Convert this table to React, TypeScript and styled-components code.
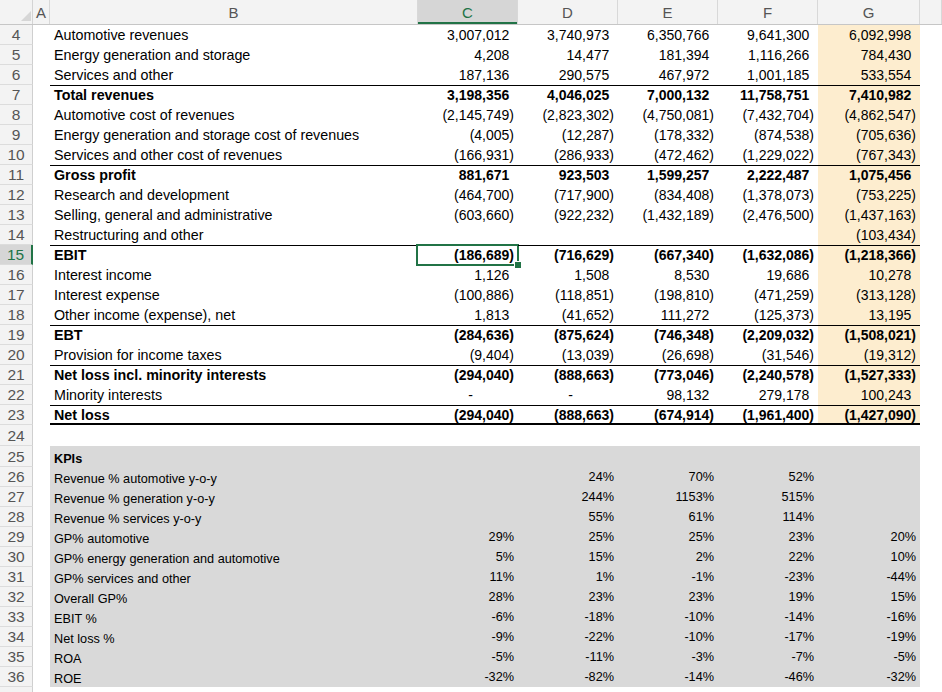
import React from "react";
import styled, { createGlobalStyle, css } from "styled-components";

const GlobalStyle = createGlobalStyle`
  html, body { margin: 0; padding: 0; background: #ffffff; }
  body { overflow: hidden; }
`;

const GRID = "33px 17px 368px repeat(4, 100px) 102px 1fr";
const GREEN = "#217346";
const PEACH = "#fdedcf";
const KPI_GRAY = "#d9d9d9";

const Sheet = styled.div`
  width: 942px;
  height: 692px;
  overflow: hidden;
  font-family: "Liberation Sans", Arial, sans-serif;
  color: #000;
`;

const HeaderRow = styled.div`
  display: grid;
  grid-template-columns: ${GRID};
  height: 25px;
  background: #f3f3f3;
  border-bottom: 1px solid #c6c6c6;
  box-sizing: border-box;
`;

const Corner = styled.div`
  position: relative;
  display: flex;
  align-items: flex-end;
  justify-content: flex-end;
  padding: 0 1px 3px 0;
  border-right: 1px solid #d4d4d4;
  box-sizing: border-box;
`;

const ColHeader = styled.div<{ $selected?: boolean }>`
  display: flex;
  align-items: flex-end;
  justify-content: center;
  padding-bottom: 2px;
  box-sizing: border-box;
  font-size: 15px;
  line-height: 18px;
  color: #555;
  border-right: 1px solid #d8d8d8;
  ${(p) =>
    p.$selected &&
    css`
      background: #d6d6d6;
      color: ${GREEN};
      box-shadow: inset 0 -2px 0 ${GREEN};
    `}
`;

const Row = styled.div<{ $h?: number }>`
  display: grid;
  grid-template-columns: ${GRID};
  height: ${(p) => p.$h ?? 20}px;
`;

const RowNum = styled.div<{ $selected?: boolean }>`
  display: flex;
  align-items: center;
  justify-content: center;
  padding-top: 1px;
  font-size: 15.5px;
  color: #555;
  background: #f3f3f3;
  border-bottom: 1px solid #dcdcdc;
  border-right: 1px solid #cfcfcf;
  box-sizing: border-box;
  ${(p) =>
    p.$selected &&
    css`
      background: #d6d6d6;
      color: ${GREEN};
      border-right: 2px solid ${GREEN};
    `}
`;

type CellProps = {
  $fill?: string;
  $top?: boolean;
  $thickBottom?: boolean;
  $bold?: boolean;
  $right?: boolean;
  $kpi?: boolean;
  $label?: boolean;
};

const Cell = styled.div<CellProps>`
  position: relative;
  display: flex;
  align-items: ${(p) => (p.$kpi && p.$label ? "flex-end" : "center")};
  justify-content: ${(p) => (p.$right ? "flex-end" : "flex-start")};
  padding: ${(p) => (p.$right ? "0 4px 0 0" : "0 0 0 4px")};
  box-sizing: border-box;
  white-space: nowrap;
  line-height: 16px;
  font-size: ${(p) => (p.$kpi ? "12.7px" : p.$label ? "14.3px" : "14px")};
  font-weight: ${(p) => (p.$bold ? 700 : 400)};
  background: ${(p) => p.$fill || "transparent"};
  box-shadow: ${(p) => {
    const s: string[] = [];
    if (p.$top) s.push("inset 0 1px 0 #000");
    if (p.$thickBottom) s.push("inset 0 -2px 0 #000");
    return s.length ? s.join(", ") : "none";
  }};
`;

const Pad = styled.span`
  visibility: hidden;
`;

const Dash = styled.span`
  padding-right: 41px;
`;

const Selection = styled.div`
  position: absolute;
  top: -1px;
  bottom: -1px;
  left: -2px;
  right: -1px;
  border: 2px solid ${GREEN};
  pointer-events: none;
`;

const FillHandle = styled.div`
  position: absolute;
  right: -5px;
  bottom: -5px;
  width: 6px;
  height: 6px;
  background: ${GREEN};
  border: 1px solid #fff;
`;

type FinRow = {
  n: number;
  label: string;
  vals: string[];
  bold?: boolean;
  top?: boolean;
  thickBottom?: boolean;
};

const fin: FinRow[] = [
  { n: 4, label: "Automotive revenues", vals: ["3,007,012", "3,740,973", "6,350,766", "9,641,300", "6,092,998"] },
  { n: 5, label: "Energy generation and storage", vals: ["4,208", "14,477", "181,394", "1,116,266", "784,430"] },
  { n: 6, label: "Services and other", vals: ["187,136", "290,575", "467,972", "1,001,185", "533,554"] },
  { n: 7, label: "Total revenues", vals: ["3,198,356", "4,046,025", "7,000,132", "11,758,751", "7,410,982"], bold: true, top: true },
  { n: 8, label: "Automotive cost of revenues", vals: ["(2,145,749)", "(2,823,302)", "(4,750,081)", "(7,432,704)", "(4,862,547)"] },
  { n: 9, label: "Energy generation and storage cost of revenues", vals: ["(4,005)", "(12,287)", "(178,332)", "(874,538)", "(705,636)"] },
  { n: 10, label: "Services and other cost of revenues", vals: ["(166,931)", "(286,933)", "(472,462)", "(1,229,022)", "(767,343)"] },
  { n: 11, label: "Gross profit", vals: ["881,671", "923,503", "1,599,257", "2,222,487", "1,075,456"], bold: true, top: true },
  { n: 12, label: "Research and development", vals: ["(464,700)", "(717,900)", "(834,408)", "(1,378,073)", "(753,225)"] },
  { n: 13, label: "Selling, general and administrative", vals: ["(603,660)", "(922,232)", "(1,432,189)", "(2,476,500)", "(1,437,163)"] },
  { n: 14, label: "Restructuring and other", vals: ["", "", "", "", "(103,434)"] },
  { n: 15, label: "EBIT", vals: ["(186,689)", "(716,629)", "(667,340)", "(1,632,086)", "(1,218,366)"], bold: true, top: true },
  { n: 16, label: "Interest income", vals: ["1,126", "1,508", "8,530", "19,686", "10,278"] },
  { n: 17, label: "Interest expense", vals: ["(100,886)", "(118,851)", "(198,810)", "(471,259)", "(313,128)"] },
  { n: 18, label: "Other income (expense), net", vals: ["1,813", "(41,652)", "111,272", "(125,373)", "13,195"] },
  { n: 19, label: "EBT", vals: ["(284,636)", "(875,624)", "(746,348)", "(2,209,032)", "(1,508,021)"], bold: true, top: true },
  { n: 20, label: "Provision for income taxes", vals: ["(9,404)", "(13,039)", "(26,698)", "(31,546)", "(19,312)"] },
  { n: 21, label: "Net loss incl. minority interests", vals: ["(294,040)", "(888,663)", "(773,046)", "(2,240,578)", "(1,527,333)"], bold: true, top: true },
  { n: 22, label: "Minority interests", vals: ["-", "-", "98,132", "279,178", "100,243"] },
  { n: 23, label: "Net loss", vals: ["(294,040)", "(888,663)", "(674,914)", "(1,961,400)", "(1,427,090)"], bold: true, top: true, thickBottom: true },
];

type KpiRow = { n: number; label: string; vals: string[]; bold?: boolean };

const kpis: KpiRow[] = [
  { n: 25, label: "KPIs", vals: ["", "", "", "", ""], bold: true },
  { n: 26, label: "Revenue % automotive y-o-y", vals: ["", "24%", "70%", "52%", ""] },
  { n: 27, label: "Revenue % generation y-o-y", vals: ["", "244%", "1153%", "515%", ""] },
  { n: 28, label: "Revenue % services y-o-y", vals: ["", "55%", "61%", "114%", ""] },
  { n: 29, label: "GP% automotive", vals: ["29%", "25%", "25%", "23%", "20%"] },
  { n: 30, label: "GP% energy generation and automotive", vals: ["5%", "15%", "2%", "22%", "10%"] },
  { n: 31, label: "GP% services and other", vals: ["11%", "1%", "-1%", "-23%", "-44%"] },
  { n: 32, label: "Overall GP%", vals: ["28%", "23%", "23%", "19%", "15%"] },
  { n: 33, label: "EBIT %", vals: ["-6%", "-18%", "-10%", "-14%", "-16%"] },
  { n: 34, label: "Net loss %", vals: ["-9%", "-22%", "-10%", "-17%", "-19%"] },
  { n: 35, label: "ROA", vals: ["-5%", "-11%", "-3%", "-7%", "-5%"] },
  { n: 36, label: "ROE", vals: ["-32%", "-82%", "-14%", "-46%", "-32%"] },
];

const cols = ["C", "D", "E", "F", "G"];

function NumberText({ v }: { v: string }) {
  if (v === "-") return <Dash>-</Dash>;
  if (v === "") return null;
  if (v.endsWith(")")) return <span>{v}</span>;
  return (
    <span>
      {v}
      <Pad>)</Pad>
    </span>
  );
}

export default function App() {
  return (
    <Sheet>
      <GlobalStyle />
      <HeaderRow>
        <Corner>
          <svg width="10" height="10" viewBox="0 0 10 10">
            <polygon points="10,0 10,10 0,10" fill="#d6d6d6" />
          </svg>
        </Corner>
        <ColHeader>A</ColHeader>
        <ColHeader>B</ColHeader>
        {cols.map((c) => (
          <ColHeader key={c} $selected={c === "C"}>
            {c}
          </ColHeader>
        ))}
        <ColHeader />
      </HeaderRow>

      {fin.map((r) => (
        <Row key={r.n}>
          <RowNum $selected={r.n === 15}>{r.n}</RowNum>
          <Cell />
          <Cell $label $top={r.top} $thickBottom={r.thickBottom} $bold={r.bold}>
            {r.label}
          </Cell>
          {r.vals.map((v, i) => (
            <Cell
              key={i}
              $right
              $top={r.top}
              $thickBottom={r.thickBottom}
              $bold={r.bold}
              $fill={i === 4 ? PEACH : undefined}
            >
              <NumberText v={v} />
              {r.n === 15 && i === 0 && (
                <Selection>
                  <FillHandle />
                </Selection>
              )}
            </Cell>
          ))}
          <Cell />
        </Row>
      ))}

      <Row $h={21}>
        <RowNum>24</RowNum>
      </Row>

      {kpis.map((r) => (
        <Row key={r.n} $h={r.n === 25 ? 21 : 20}>
          <RowNum>{r.n}</RowNum>
          <Cell />
          <Cell $kpi $label $bold={r.bold} $fill={KPI_GRAY}>
            {r.label}
          </Cell>
          {r.vals.map((v, i) => (
            <Cell key={i} $kpi $right $fill={KPI_GRAY}>
              {v}
            </Cell>
          ))}
          <Cell />
        </Row>
      ))}

      <Row>
        <RowNum>37</RowNum>
      </Row>
    </Sheet>
  );
}
